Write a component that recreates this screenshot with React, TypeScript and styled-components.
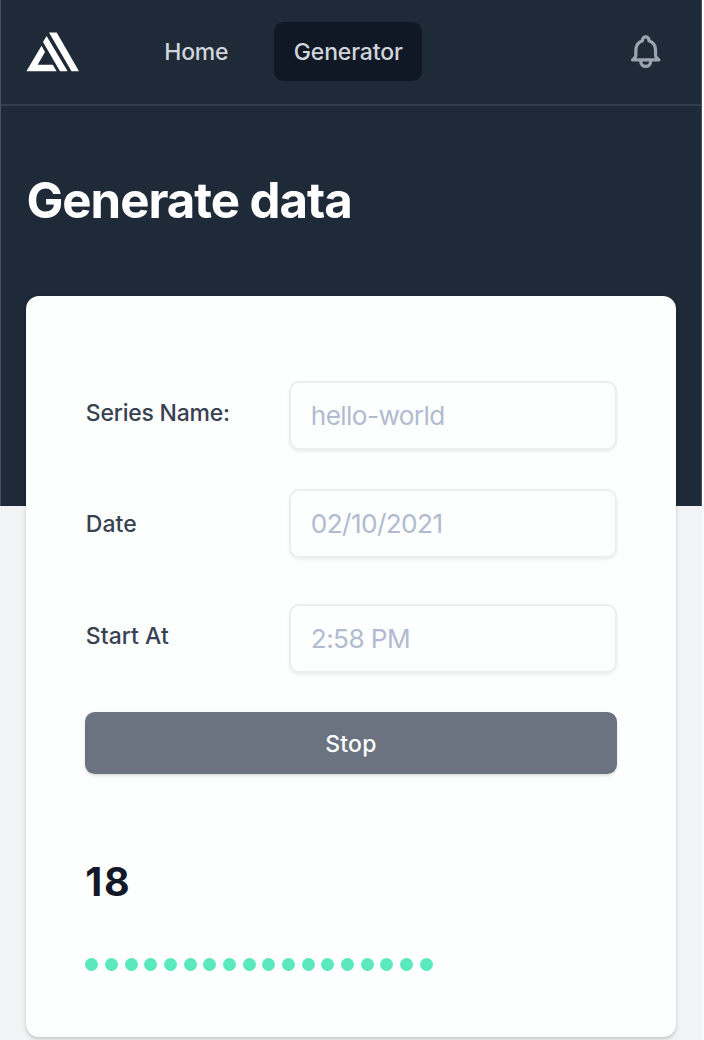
import React from "react";
import styled, { createGlobalStyle } from "styled-components";

const GlobalStyle = createGlobalStyle`
  *, *::before, *::after { box-sizing: border-box; }
  html, body { margin: 0; padding: 0; }
  body {
    background: #fafafb;
    font-family: Inter, "Liberation Sans", sans-serif;
    overflow: hidden;
  }
  h1, h2, p { margin: 0; }
`;

const Page = styled.div`
  width: 702px;
  height: 1040px;
  overflow: hidden;
  background: #f2f3f5;
`;

const Hero = styled.header`
  height: 505.5px;
  background: #1e2a37;
  border-left: 1px solid #46525e;
  border-right: 1px solid #46525e;
`;

const Nav = styled.nav`
  height: 106px;
  padding: 0 36px 1px 25px;
  display: flex;
  align-items: center;
  border-bottom: 2px solid #323e4c;
`;

const Logo = styled.svg`
  width: 54px;
  height: 40px;
  margin-right: 64.5px;
`;

const NavLink = styled.a<{ $active?: boolean }>`
  height: 59px;
  padding: 1px 19.7px 0;
  margin-right: 26px;
  display: flex;
  align-items: center;
  border-radius: 9.8px;
  font-size: 22.97px;
  font-weight: 500;
  letter-spacing: -0.15px;
  color: #d1d5db;
  background: ${(p) => (p.$active ? "#111825" : "transparent")};
`;

const BellIcon = styled.svg`
  width: 39.4px;
  height: 39.4px;
  margin-left: auto;
  color: #9ca3af;
`;

const Title = styled.h1`
  padding: 64.5px 25.5px 0;
  font-size: 49.2px;
  line-height: 59px;
  font-weight: 700;
  letter-spacing: -1.05px;
  color: #fff;
`;

const Card = styled.main`
  width: 649.5px;
  height: 741px;
  margin: -209.5px 0 0 26px;
  padding: 85px 59px 0 59.3px;
  position: relative;
  border-radius: 13px;
  background: #fdfefe;
  box-shadow: 0 1.6px 5px rgba(0, 0, 0, 0.12), 0 1.6px 3px rgba(0, 0, 0, 0.08);
`;

const Field = styled.div<{ $gap: number }>`
  display: grid;
  grid-template-columns: 203.5px 1fr;
  margin-bottom: ${(p) => p.$gap}px;
`;

const Label = styled.label<{ $drop?: number; $tracking?: number }>`
  padding-top: ${(p) => 15.5 + (p.$drop ?? 0)}px;
  padding-left: 0.5px;
  font-size: 22.97px;
  line-height: 33px;
  font-weight: 500;
  letter-spacing: ${(p) => p.$tracking ?? 0.05}px;
  color: #374151;
`;

const Input = styled.input`
  width: 100%;
  height: 68.5px;
  padding: 0 20px;
  border: 2px solid #eceff0;
  border-radius: 10px;
  outline: none;
  background: #fdfefe;
  box-shadow: 0 1.6px 3px rgba(0, 0, 0, 0.06);
  font-family: inherit;
  font-size: 26.2px;
  letter-spacing: -0.6px;
  color: #374151;
  &::placeholder { color: #b1bbd0; opacity: 1; }
`;

const StopButton = styled.button`
  width: 100%;
  height: 62px;
  padding: 2px 0 0;
  border: 0;
  border-radius: 9.8px;
  background: #6b7280;
  box-shadow: 0 1.6px 3px rgba(0, 0, 0, 0.12);
  font-family: inherit;
  font-size: 22.97px;
  font-weight: 500;
  letter-spacing: 0.22px;
  color: #fff;
`;

const Count = styled.h2`
  margin-top: 84px;
  font-size: 39.4px;
  line-height: 48px;
  font-weight: 700;
  letter-spacing: 1.6px;
  color: #111827;
`;

const Dots = styled.div`
  display: flex;
  gap: 6.57px;
  margin-top: 52px;
`;

const Dot = styled.span`
  width: 13.12px;
  height: 13.12px;
  border-radius: 50%;
  background: #5ae8bc;
`;

export default function App() {
  const count = 18;
  return (
    <>
      <GlobalStyle />
      <Page>
        <Hero>
          <Nav>
            <Logo viewBox="26 31.5 54 40" fill="#fff">
              <path d="M49 32h7.7L79 70.8h-7.5z" />
              <path d="M46.6 35.4L67.6 70.8H60L43 41.5z" />
              <path d="M41.5 45.3L45 51.5L37.7 64.2H52.8L56.6 70.8H26.4z" />
            </Logo>
            <NavLink>Home</NavLink>
            <NavLink $active>Generator</NavLink>
            <BellIcon
              viewBox="0 0 24 24"
              fill="none"
              stroke="currentColor"
              strokeWidth={2}
              strokeLinecap="round"
              strokeLinejoin="round"
            >
              <path d="M15 17h5l-1.405-1.405A2.032 2.032 0 0118 14.158V11a6.002 6.002 0 00-4-5.659V5a2 2 0 10-4 0v.341C7.67 6.165 6 8.388 6 11v3.159c0 .538-.214 1.055-.595 1.436L4 17h5m6 0v1a3 3 0 11-6 0v-1m6 0H9" />
            </BellIcon>
          </Nav>
          <Title>Generate data</Title>
        </Hero>
        <Card>
          <Field $gap={39.5}>
            <Label htmlFor="series" $tracking={-0.22}>Series Name:</Label>
            <Input id="series" placeholder="hello-world" />
          </Field>
          <Field $gap={46.5}>
            <Label htmlFor="date" $drop={3.5}>Date</Label>
            <Input id="date" placeholder="02/10/2021" />
          </Field>
          <Field $gap={39.5}>
            <Label htmlFor="start">Start At</Label>
            <Input id="start" placeholder="2:58 PM" />
          </Field>
          <StopButton type="button">Stop</StopButton>
          <Count>{count}</Count>
          <Dots>
            {Array.from({ length: count }, (_, i) => (
              <Dot key={i} />
            ))}
          </Dots>
        </Card>
      </Page>
    </>
  );
}
